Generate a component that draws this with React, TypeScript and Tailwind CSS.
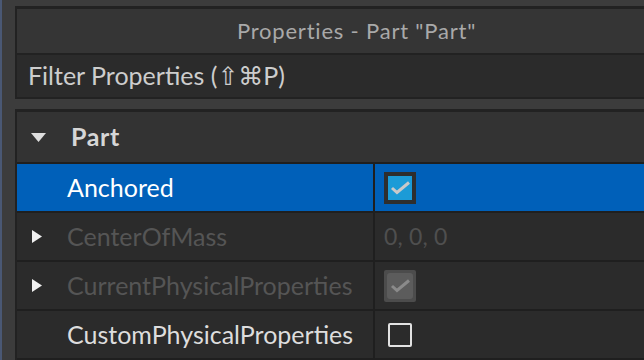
import React from 'react';

const font = { fontFamily: 'Lato, "Noto Sans", "DejaVu Sans", sans-serif' };

const Check = ({ color }: { color: string }) => (
  <svg viewBox="0 0 24 24" className="w-[24px] h-[24px]">
    <polyline points="4,12 9,16.5 21,6.5" fill="none" stroke={color} strokeWidth="3" strokeLinejoin="miter" />
  </svg>
);

const TriDown = () => (
  <svg viewBox="0 0 15 9" className="w-[15px] h-[9px]">
    <polygon points="0,0 15,0 7.5,9" fill="#dedede" />
  </svg>
);

const TriRight = () => (
  <svg viewBox="0 0 10 13" className="w-[10px] h-[13px]">
    <polygon points="0,0 10,6.5 0,13" fill="#f0f0f0" />
  </svg>
);

type Row = {
  name: string;
  expandable?: boolean;
  selected?: boolean;
  disabled?: boolean;
  value: React.ReactNode;
};

const rows: Row[] = [
  {
    name: 'Anchored',
    selected: true,
    value: (
      <div className="w-[32px] h-[32px] bg-[#2e2e2e] p-[4px]">
        <div className="w-[24px] h-[24px] bg-[#1b9bd7]">
          <Check color="#c9c9c9" />
        </div>
      </div>
    ),
  },
  {
    name: 'CenterOfMass',
    expandable: true,
    disabled: true,
    value: <span className="text-[23px] text-[#4f4f4f] tracking-[0.2px]">0, 0, 0</span>,
  },
  {
    name: 'CurrentPhysicalProperties',
    expandable: true,
    disabled: true,
    value: (
      <div className="w-[32px] h-[32px] bg-[#4c4c4c] p-[3px] rounded-[2px]">
        <div className="w-[26px] h-[26px] bg-[#5c5c5c] rounded-[3px] p-[1px]">
          <Check color="#8a8a8a" />
        </div>
      </div>
    ),
  },
  {
    name: 'CustomPhysicalProperties',
    value: <div className="w-[24px] h-[24px] border-2 border-[#e2e2e2] rounded-[2px] ml-[4px]" />,
  },
];

export default function App() {
  return (
    <div className="w-[644px] h-[360px] flex overflow-hidden bg-[#3c3c3c]" style={font}>
      <div className="w-[2px] bg-[#4a5874] shrink-0" />
      <div className="flex-1 flex flex-col pl-[13px] pt-[6px]">
        {/* title */}
        <div className="h-[49px] shrink-0 border-t-[3px] border-b-[2px] border-l-[2px] border-[#222222] bg-[#353535] flex items-center justify-center pl-[52px] pb-[2px]">
          <span className="text-[22px] text-[#a9a9a9] tracking-[0.8px]">Properties - Part "Part"</span>
        </div>
        {/* filter */}
        <div className="h-[44px] shrink-0 border-b-[2px] border-l-[2px] border-[#222222] bg-[#2b2b2b] flex items-center pl-[11px]">
          <span className="text-[25px] text-[#cdcdcd]">Filter Properties (⇧⌘P)</span>
        </div>
        <div className="h-[10px] shrink-0" />
        {/* list */}
        <div className="flex-1 flex flex-col border-t-[3px] border-l-[2px] border-[#222222] bg-[#2b2b2b]">
          <div className="h-[52px] shrink-0 bg-[#333333] border-b-[2px] border-[#1f1f1f] flex items-center">
            <div className="w-[54px] pl-[14px] flex items-center shrink-0">
              <TriDown />
            </div>
            <span className="text-[25px] font-bold text-[#d6d6d6] tracking-[0.6px]">Part</span>
          </div>
          {rows.map((r) => (
            <div
              key={r.name}
              className={`h-[49px] shrink-0 flex border-b-[2px] border-[#1f1f1f] ${r.selected ? 'bg-[#0060b9]' : 'bg-[#2b2b2b]'}`}
            >
              <div className="w-[358px] shrink-0 flex items-center border-r-[2px] border-[#1f1f1f]">
                <div className="w-[50px] pl-[15px] flex items-center shrink-0">{r.expandable && <TriRight />}</div>
                <span
                  className={`text-[25px] ${r.selected ? 'text-white' : r.disabled ? 'text-[#555555]' : 'text-[#dddddd]'}`}
                >
                  {r.name}
                </span>
              </div>
              <div className="flex-1 flex items-center pl-[9px]">{r.value}</div>
            </div>
          ))}
        </div>
      </div>
    </div>
  );
}
